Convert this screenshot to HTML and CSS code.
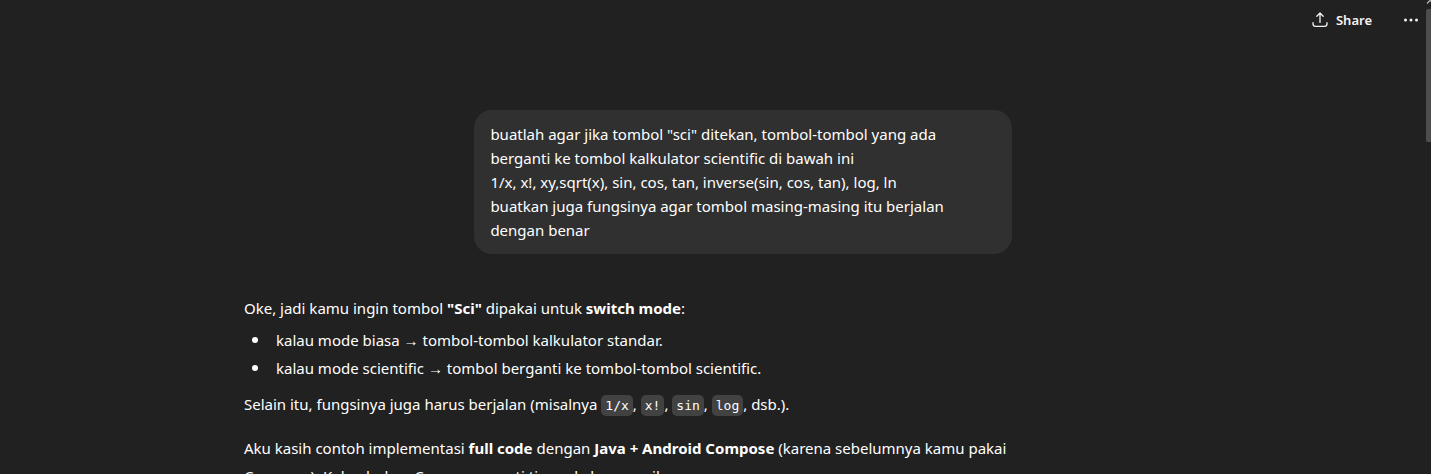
FILE: index.html
```html
<!DOCTYPE html>
<html lang="id">
<head>
<meta charset="utf-8">
<meta name="viewport" content="width=device-width, initial-scale=1">
<title>Chat</title>
<link rel="stylesheet" href="styles.css">
</head>
<body>
<div class="app">
  <header class="topbar">
    <button class="share" type="button">
      <svg class="icon" viewBox="0 0 16 16" aria-hidden="true"><path d="M8 10.4V1.2M4.8 4.2L8 1l3.2 3.2M1 10.6v1.2c0 1.7.9 2.6 2.6 2.6h8.8c1.7 0 2.6-.9 2.6-2.6v-1.2"/></svg>
      <span>Share</span>
    </button>
    <button class="more" type="button" aria-label="More options">
      <svg class="dots" viewBox="0 0 16 16" aria-hidden="true"><circle cx="2.5" cy="8" r="1.5"/><circle cx="8" cy="8" r="1.5"/><circle cx="13.5" cy="8" r="1.5"/></svg>
    </button>
  </header>
  <main class="thread">
    <div class="bubble">buatlah agar jika tombol "sci" ditekan, tombol-tombol yang ada berganti ke tombol kalkulator scientific di bawah ini<br>1/x, x!, xy,sqrt(x), sin, cos, tan, inverse(sin, cos, tan), log, ln<br>buatkan juga fungsinya agar tombol masing-masing itu berjalan dengan benar</div>
    <article class="answer">
      <p>Oke, jadi kamu ingin tombol <strong>"Sci"</strong> dipakai untuk <strong>switch mode</strong>:</p>
      <ul>
        <li>kalau mode biasa → tombol-tombol kalkulator standar.</li>
        <li>kalau mode scientific → tombol berganti ke tombol-tombol scientific.</li>
      </ul>
      <p>Selain itu, fungsinya juga harus berjalan (misalnya <code>1/x</code>, <code>x!</code>, <code>sin</code>, <code>log</code>, dsb.).</p>
      <p>Aku kasih contoh implementasi <strong>full code</strong> dengan <strong>Java + Android Compose</strong> (karena sebelumnya kamu pakai Compose). Kalau bukan Compose, nanti tinggal aku sesuaikan.</p>
    </article>
  </main>
  <div class="scrollbar" aria-hidden="true">
    <svg class="arrow" viewBox="0 0 5 9"><path d="M1 3.5L4 .5l1 1"/></svg>
    <span class="thumb"></span>
  </div>
</div>
</body>
</html>
```
FILE: styles.css
```css
* { box-sizing: border-box; }
body {
  margin: 0;
  background: #212121;
  color: #fff;
  font: 15px/24px "Noto Sans", "Open Sans", sans-serif;
}
.app { position: relative; height: 100vh; overflow: hidden; }
.topbar {
  display: flex;
  justify-content: flex-end;
  align-items: center;
  gap: 31px;
  height: 39px;
  padding-right: 12px;
}
button {
  display: flex;
  align-items: center;
  gap: 8px;
  padding: 0;
  border: 0;
  background: none;
  color: #f3f3f3;
  font: 600 13px/20px "Noto Sans", "Open Sans", sans-serif;
}
.icon, .dots { width: 16px; height: 16px; }
.icon { fill: none; stroke: currentColor; stroke-width: 1.3; stroke-linecap: round; stroke-linejoin: round; }
.dots { fill: currentColor; }
.thread {
  display: flex;
  flex-direction: column;
  width: 54%;
  max-width: 768px;
  margin: 71px 0 0 17.05%;
}
.bubble {
  align-self: flex-end;
  width: 70%;
  padding: 12px 16px;
  border-radius: 18px;
  background: #303030;
}
.answer { margin-top: 40px; line-height: 28px; }
.answer p { margin: 0 0 16px; }
.answer ul { margin: -12px 0 8px; padding: 0 0 0 8px; list-style: none; }
.answer li { display: grid; grid-template-columns: 6px 1fr; column-gap: 18px; align-items: center; }
.answer li::before { content: ""; height: 6px; border-radius: 50%; background: #fff; }
code {
  padding: 3px 4px;
  border-radius: 5px;
  background: #424242;
  font: 500 13px/16px "DejaVu Sans Mono", monospace;
}
.scrollbar { position: absolute; top: 0; right: 0; width: 5px; }
.arrow { display: block; width: 5px; height: 9px; fill: none; stroke: #aaa; stroke-width: 1.5; }
.thumb { display: block; height: 133px; border-radius: 2px 0 0 2px; background: #4d4d4d; }
```
